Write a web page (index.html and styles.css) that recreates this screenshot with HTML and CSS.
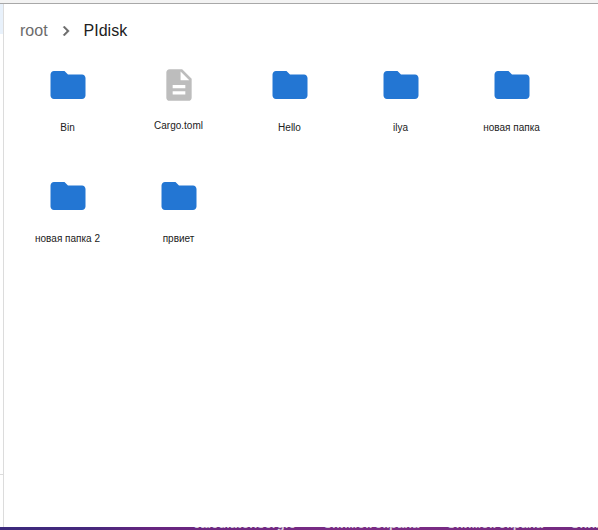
FILE: index.html
```
<!DOCTYPE html>
<html lang="ru">
<head>
<meta charset="utf-8">
<title>PIdisk</title>
<link rel="stylesheet" href="styles.css">
</head>
<body>
<svg class="sprite" aria-hidden="true">
  <symbol id="folder" viewBox="0 0 24 24"><path d="M10 4H4c-1.100 0-1.990.900-1.990 2L2 18c0 1.100.900 2 2 2h16c1.100 0 2-.900 2-2V8c0-1.100-.900-2-2-2h-8l-2-2z"/></symbol>
  <symbol id="file" viewBox="0 0 24 24"><path d="M14 2H6c-1.100 0-1.990.900-1.990 2L4 20c0 1.100.890 2 1.990 2H18c1.100 0 2-.900 2-2V8l-6-6zm2 16H8v-2h8v2zm0-4H8v-2h8v2zm-3-5V3.500L18.500 9H13z"/></symbol>
</svg>
<div class="window">
  <header class="toolbar"></header>
  <div class="content">
    <aside class="sidebar">
      <div class="selected"></div>
      <div class="footer"></div>
    </aside>
    <main class="main">
      <nav class="crumbs" aria-label="breadcrumb">
        <a class="crumb" href="#">root</a>
        <svg class="chevron" viewBox="0 0 24 24" aria-hidden="true"><path d="M10 6L8.590 7.410 13.170 12l-4.580 4.590L10 18l6-6z"/></svg>
        <span class="current" aria-current="page">PIdisk</span>
      </nav>
      <ul class="files">
        <li class="item"><svg class="folder"><use href="#folder"/></svg><span class="name">Bin</span></li>
        <li class="item"><svg class="file"><use href="#file"/></svg><span class="name">Cargo.toml</span></li>
        <li class="item"><svg class="folder"><use href="#folder"/></svg><span class="name">Hello</span></li>
        <li class="item"><svg class="folder"><use href="#folder"/></svg><span class="name">ilya</span></li>
        <li class="item"><svg class="folder"><use href="#folder"/></svg><span class="name">новая папка</span></li>
        <li class="item"><svg class="folder"><use href="#folder"/></svg><span class="name">новая папка 2</span></li>
        <li class="item"><svg class="folder"><use href="#folder"/></svg><span class="name">првиет</span></li>
      </ul>
    </main>
  </div>
  <footer class="desktop">
    <span class="label">calculator.sergle</span>
    <span class="label">Снимок экрана</span>
    <span class="label">Снимок экрана</span>
    <span class="label">Сним</span>
  </footer>
</div>
</body>
</html>
```
FILE: styles.css
```
* { box-sizing: border-box; }

body {
  margin: 0;
  background: #fff;
  color: #212121;
  font-family: "Liberation Sans", Arial, sans-serif;
}

.sprite { position: absolute; width: 0; height: 0; }

.window {
  display: flex;
  flex-direction: column;
  height: 100vh;
  overflow: hidden;
}

.toolbar {
  flex: none;
  height: 4px;
  background: #f3f3f3;
  border-bottom: 1px solid #a8a8a8;
}

.content { display: flex; flex: 1; min-height: 0; }

.sidebar {
  display: flex;
  flex-direction: column;
  justify-content: space-between;
  width: 4px;
  border-right: 1px solid #dcdcdc;
}

.selected { height: 30px; background: #e8f1fb; }
.footer { height: 53px; border-top: 1px solid #dcdcdc; }

.main { flex: 1; padding: 16px 8px 0; }

.crumbs {
  display: flex;
  align-items: center;
  height: 22px;
  padding-left: 8px;
  font-size: 16px;
  line-height: 22px;
}

.crumb { color: #6b6b6b; text-decoration: none; }
.chevron { width: 20px; height: 20px; margin: 0 8px; fill: #6b6b6b; stroke: #6b6b6b; stroke-width: 0.5; }

.files {
  display: grid;
  grid-template-columns: repeat(auto-fill, 111px);
  grid-auto-rows: 111px;
  margin: 0;
  padding: 22px 0 0;
  list-style: none;
}

.item { display: flex; flex-direction: column; align-items: center; }
.folder { width: 42px; height: 42px; fill: #2376d3; }
.file { width: 38px; height: 38px; margin-top: 2px; fill: #bdbdbd; }
.name { margin-top: 16px; font-size: 10px; line-height: 12px; }

.desktop {
  display: flex;
  flex: none;
  align-items: flex-end;
  gap: 27px;
  height: 3px;
  padding-left: 193px;
  overflow: hidden;
  background: linear-gradient(90deg, #3b2a7c 0, #45287c 15%, #66257f 25%, #7b2c85 60%, #732a80 100%);
  color: #d8cfdc;
  font-size: 13px;
  font-weight: bold;
  line-height: 13px;
  white-space: nowrap;
}
```
